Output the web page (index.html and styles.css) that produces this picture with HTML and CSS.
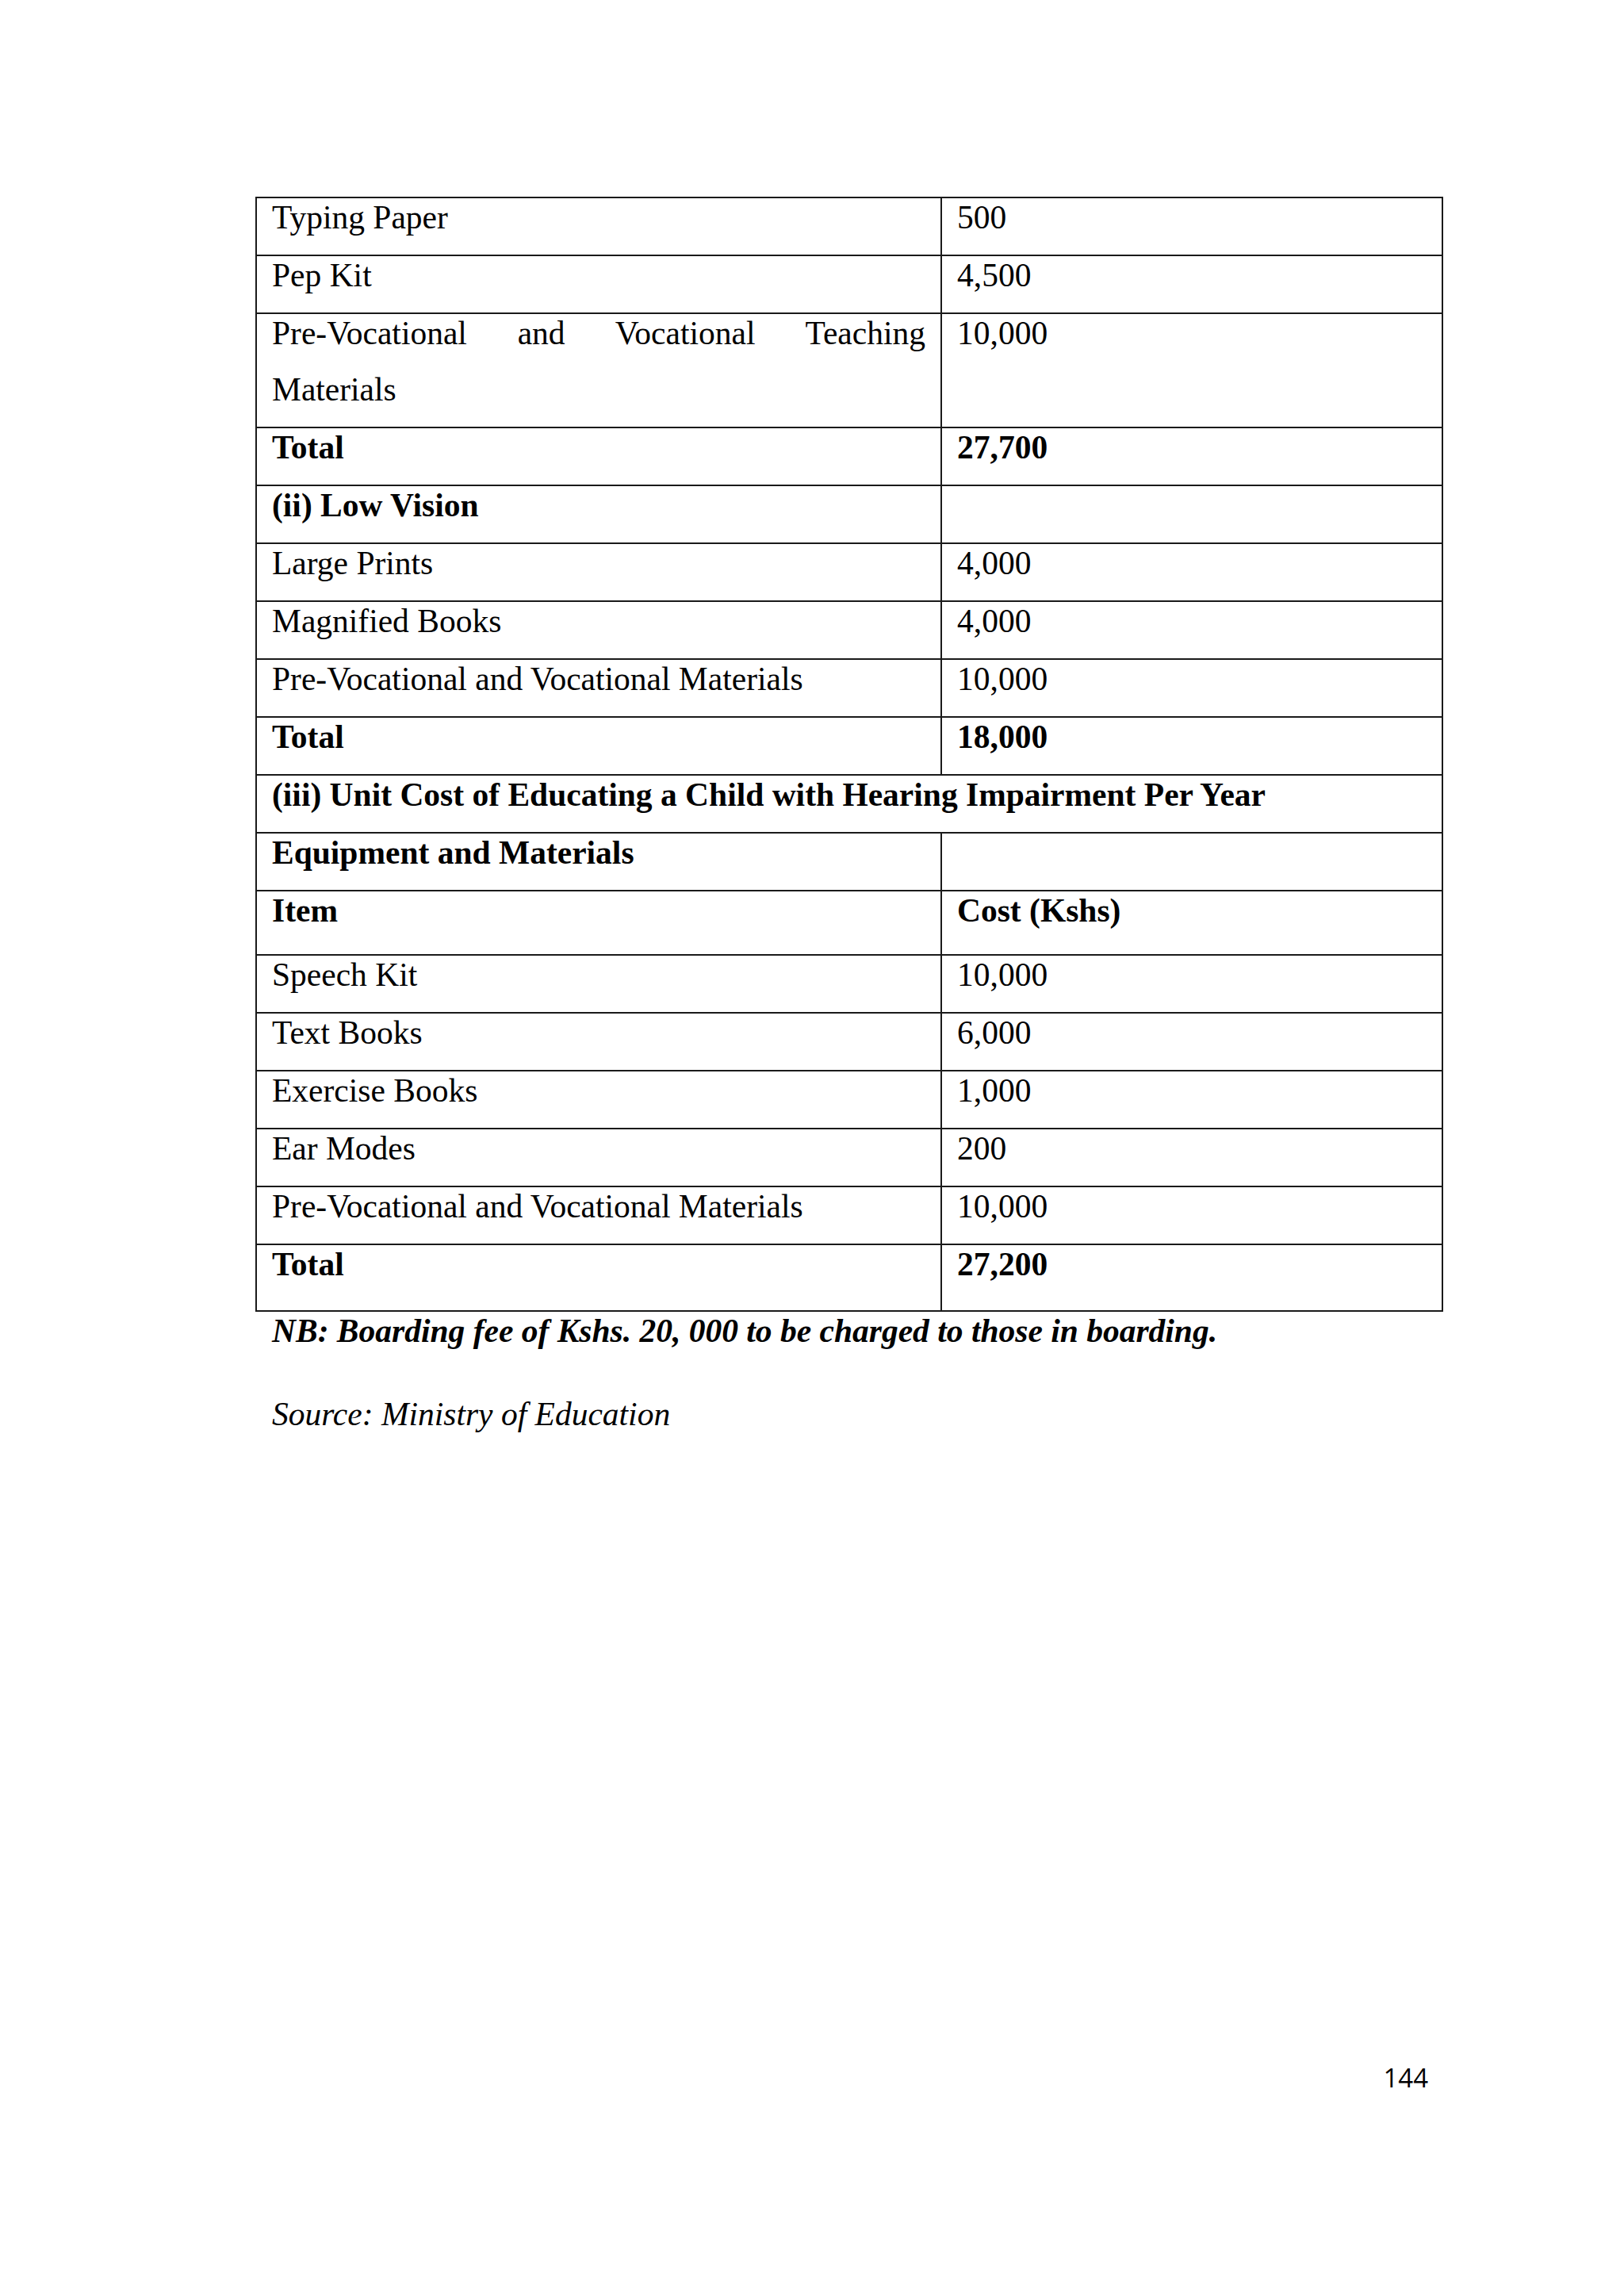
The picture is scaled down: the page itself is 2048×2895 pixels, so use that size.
FILE: index.html
```html
<!DOCTYPE html>
<html lang="en">
<head>
<meta charset="utf-8">
<title>Unit Cost Table - Page 144</title>
<link rel="stylesheet" href="styles.css">
</head>
<body>
<div class="page">
  <div class="tbl">
    <div class="cell"><p>Typing Paper</p></div>
    <div class="cell"><p>500</p></div>

    <div class="cell"><p>Pep Kit</p></div>
    <div class="cell"><p>4,500</p></div>

    <div class="cell"><p class="just">Pre-Vocational and Vocational Teaching Materials</p></div>
    <div class="cell"><p>10,000</p></div>

    <div class="cell b"><p>Total</p></div>
    <div class="cell b"><p>27,700</p></div>

    <div class="cell b"><p>(ii) Low Vision</p></div>
    <div class="cell"><p>&nbsp;</p></div>

    <div class="cell"><p>Large Prints</p></div>
    <div class="cell"><p>4,000</p></div>

    <div class="cell"><p>Magnified Books</p></div>
    <div class="cell"><p>4,000</p></div>

    <div class="cell"><p>Pre-Vocational and Vocational Materials</p></div>
    <div class="cell"><p>10,000</p></div>

    <div class="cell b"><p>Total</p></div>
    <div class="cell b"><p>18,000</p></div>

    <div class="cell b wide"><p>(iii) Unit Cost of Educating a Child with Hearing Impairment Per Year</p></div>

    <div class="cell b"><p>Equipment and Materials</p></div>
    <div class="cell"><p>&nbsp;</p></div>

    <div class="cell b tall"><p>Item</p></div>
    <div class="cell b tall"><p>Cost (Kshs)</p></div>

    <div class="cell"><p>Speech Kit</p></div>
    <div class="cell"><p>10,000</p></div>

    <div class="cell"><p>Text Books</p></div>
    <div class="cell"><p>6,000</p></div>

    <div class="cell"><p>Exercise Books</p></div>
    <div class="cell"><p>1,000</p></div>

    <div class="cell"><p>Ear Modes</p></div>
    <div class="cell"><p>200</p></div>

    <div class="cell"><p>Pre-Vocational and Vocational Materials</p></div>
    <div class="cell"><p>10,000</p></div>

    <div class="cell b taller"><p>Total</p></div>
    <div class="cell b taller"><p>27,200</p></div>
  </div>

  <p class="nb">NB: Boarding fee of Kshs. 20, 000 to be charged to those in boarding.</p>
  <p class="src">Source: Ministry of Education</p>

  <div class="foot"><span>144</span></div>
</div>
</body>
</html>
```

FILE: styles.css
```css
html, body {
  margin: 0;
  padding: 0;
  background: #ffffff;
}

.page {
  width: 2048px;
  height: 2895px;
  box-sizing: border-box;
  padding-top: 248px;
  display: flex;
  flex-direction: column;
  font-family: "Liberation Serif", "Times New Roman", serif;
  font-size: 41.5px;
  color: #000000;
  background: #ffffff;
}

.tbl {
  margin-left: 322px;
  width: 1498px;
  box-sizing: border-box;
  display: grid;
  grid-template-columns: 864px 632px;
  border-top: 2px solid #1a1a1a;
  border-left: 2px solid #1a1a1a;
}

.cell {
  box-sizing: border-box;
  border-right: 2px solid #1a1a1a;
  border-bottom: 2px solid #1a1a1a;
  padding: 0 19px;
  min-width: 0;
}

.cell p {
  margin: -11.4px 0 11.4px;
  line-height: 71px;
}

.cell p.just {
  text-align: justify;
}

.wide {
  grid-column: 1 / span 2;
}

.b {
  font-weight: bold;
}

.tall p {
  margin-bottom: 19.4px;
}

.taller p {
  margin-bottom: 22.8px;
}

.nb {
  margin: -11.4px 0 34px 343px;
  line-height: 71px;
  font-weight: bold;
  font-style: italic;
}

.src {
  margin: 0 0 0 343px;
  line-height: 71px;
  font-style: italic;
}

.foot {
  margin-top: auto;
  display: flex;
  justify-content: flex-end;
  padding: 0 247px 253px 0;
  font-family: "Open Sans", "Liberation Sans", sans-serif;
  font-size: 33px;
  line-height: 45px;
}
```
